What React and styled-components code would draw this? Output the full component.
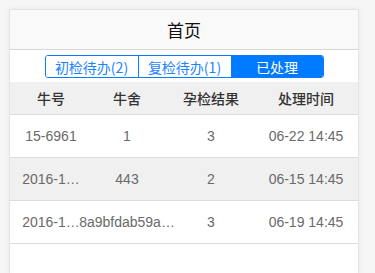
import React from "react";
import styled, { createGlobalStyle } from "styled-components";

const Global = createGlobalStyle`
  html, body { margin: 0; padding: 0; background: #f6f6f6; }
  body { font-family: "Liberation Sans", "Noto Sans CJK SC", sans-serif; }
  * { box-sizing: border-box; }
`;

const Card = styled.div`
  margin: 9px 0 0 9px;
  width: 350px;
  min-height: 264px;
  background: #fff;
  border: 1px solid #e4e4e4;
  border-bottom: none;
  box-shadow: 0 0 6px rgba(0, 0, 0, 0.06);
`;

const Header = styled.div`
  height: 40px;
  background: #f9f9f9;
  border-bottom: 1px solid #d8d8d8;
  display: flex;
  align-items: center;
  justify-content: center;
  font-size: 17px;
  color: #111;
  font-family: "Noto Sans CJK SC", sans-serif;
`;

const TabBar = styled.div`
  display: flex;
  justify-content: center;
  padding: 5px 0 4px;
  background: #fff;
`;

const Segmented = styled.div`
  display: flex;
  border: 1px solid #0a7cff;
  border-radius: 3px;
  overflow: hidden;
`;

const Seg = styled.div`
  width: ${(p) => p.$w}px;
  height: 21px;
  display: flex;
  align-items: center;
  justify-content: center;
  font-size: 14px;
  color: ${(p) => (p.$active ? "#fff" : "#1a84ff")};
  background: ${(p) => (p.$active ? "#007aff" : "#fff")};
  border-left: ${(p) => (p.$first ? "none" : "1px solid #0a7cff")};
  font-family: "Noto Sans CJK SC", sans-serif;
`;

const Row = styled.div`
  display: grid;
  grid-template-columns: 82px 70px 98px 1fr;
  padding-right: 6px;
  height: ${(p) => (p.$head ? 33 : 43)}px;
  background: ${(p) => (p.$head || p.$alt ? "#f0f0f0" : "#fff")};
  border-bottom: 1px solid #dcdcdc;
`;

const Cell = styled.div`
  display: flex;
  align-items: center;
  justify-content: center;
  white-space: nowrap;
  font-size: 14px;
  color: ${(p) => (p.$head ? "#333" : "#6a6a6a")};
  font-weight: ${(p) => (p.$head ? 500 : 400)};
  font-family: ${(p) =>
    p.$head ? `"Noto Sans CJK SC", sans-serif` : `"Liberation Sans", "Noto Sans CJK SC", sans-serif`};
  min-width: 0;
`;

const tabs = [
  { label: "初检待办(2)", w: 92 },
  { label: "复检待办(1)", w: 93 },
  { label: "已处理", w: 92, active: true },
];

const rows = [
  ["15-6961", "1", "3", "06-22 14:45"],
  ["2016-1…", "443", "2", "06-15 14:45"],
  ["2016-1…", "8a9bfdab59a…", "3", "06-19 14:45"],
];

export default function App() {
  return (
    <>
      <Global />
      <Card>
        <Header>首页</Header>
        <TabBar>
          <Segmented>
            {tabs.map((t, i) => (
              <Seg key={t.label} $w={t.w} $active={t.active} $first={i === 0}>
                {t.label}
              </Seg>
            ))}
          </Segmented>
        </TabBar>
        <Row $head>
          {["牛号", "牛舍", "孕检结果", "处理时间"].map((h) => (
            <Cell $head key={h}>{h}</Cell>
          ))}
        </Row>
        {rows.map((r, i) => (
          <Row key={i} $alt={i === 1}>
            {r.map((c, j) => (
              <Cell key={j}>{c}</Cell>
            ))}
          </Row>
        ))}
      </Card>
    </>
  );
}
